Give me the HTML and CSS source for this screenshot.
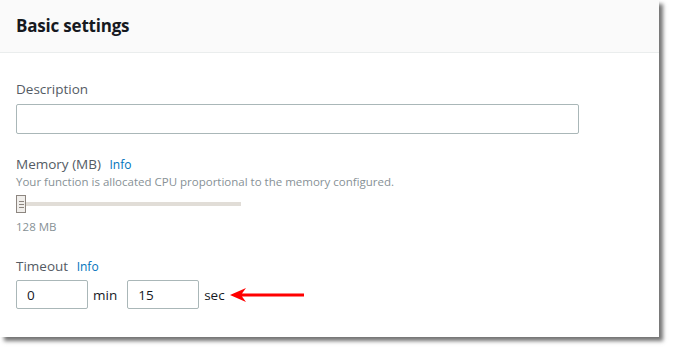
FILE: index.html
```html
<!DOCTYPE html>
<html lang="en">
<head>
  <meta charset="UTF-8" />
  <title>Basic settings</title>
  <link rel="stylesheet" href="styles.css">
</head>
<body>
  <div class="panel">
    <div class="panel-header">
      <h2>Basic settings</h2>
    </div>

    <div class="panel-body">
      <div class="field">
        <label class="label">Description</label>
        <input class="text-input wide" type="text" />
      </div>

      <div class="field">
        <label class="label">Memory (MB) <a class="info">Info</a></label>
        <p class="hint">Your function is allocated CPU proportional to the memory configured.</p>
        <div class="slider">
          <span class="thumb"><i></i><i></i><i></i></span>
          <span class="track"></span>
        </div>
        <p class="hint value">128 MB</p>
      </div>

      <div class="field">
        <label class="label">Timeout <a class="info">Info</a></label>
        <div class="timeout-row">
          <input class="text-input small" type="text" value="0" />
          <span class="unit">min</span>
          <input class="text-input small" type="text" value="15" />
          <span class="unit">sec</span>
          <svg class="arrow" width="74" height="14" viewBox="0 0 74 14">
            <path d="M0 7 L16 0 L12 5.5 L74 5.5 L74 8.5 L12 8.5 L16 14 Z" fill="#f00" />
          </svg>
        </div>
      </div>
    </div>
  </div>
</body>
</html>
```

FILE: styles.css
```css
body {
  margin: 0;
  height: 352px;
  background: #fff;
  font-family: "Open Sans", "Noto Sans", sans-serif;
  color: #16191f;
}

.panel {
  width: 659px;
  height: 337px;
  background: #fff;
  box-shadow: 4px 4px 4px rgba(0, 0, 0, 0.55);
  box-sizing: border-box;
}

.panel-header {
  height: 53px;
  background: #fafafa;
  border-bottom: 1px solid #eaeded;
  box-sizing: border-box;
  padding: 0 16px;
  display: flex;
  align-items: center;
}

.panel-header h2 {
  margin: 0 0 2px 0;
  font-size: 17px;
  font-weight: 700;
  letter-spacing: -0.2px;
}

.panel-body {
  padding: 26px 16px 0 16px;
}

.field {
  margin-bottom: 20px;
}

.field + .field {
  margin-bottom: 0;
}

.field + .field + .field {
  margin-top: 21px;
}

.label {
  display: block;
  font-size: 13.5px;
  color: #545b64;
  line-height: 20px;
}

.info {
  color: #0073bb;
  font-size: 12px;
  margin-left: 5px;
}

.hint {
  margin: -1px 0 0 0;
  font-size: 11.5px;
  color: #879196;
  line-height: 16px;
}

.text-input {
  box-sizing: border-box;
  height: 30px;
  border: 1px solid #aab7b8;
  border-radius: 2px;
  font-family: inherit;
  font-size: 13.5px;
  color: #16191f;
  padding: 0 10px;
  background: #fff;
  margin-top: 5px;
}

.wide {
  width: 563px;
}

.small {
  width: 72px;
  height: 29px;
  margin-top: 0;
}

.slider {
  display: flex;
  align-items: center;
  height: 18px;
  margin: 5px 0 7px 0;
}

.thumb {
  box-sizing: border-box;
  width: 10px;
  height: 18px;
  border: 1px solid #8d8680;
  background: #f0eeeb;
  display: flex;
  flex-direction: column;
  justify-content: center;
  align-items: center;
  gap: 2px;
}

.thumb i {
  display: block;
  width: 5px;
  height: 1px;
  background: #8d8680;
}

.track {
  width: 215px;
  height: 4px;
  background: #e1ddd7;
}

.timeout-row {
  display: flex;
  align-items: center;
  margin-top: 3px;
}

.unit {
  font-size: 13.5px;
  margin: 0 5px;
  color: #16191f;
}

.timeout-row .unit:first-of-type {
  margin-right: 10px;
}

.arrow {
  margin-left: 0;
}
```
